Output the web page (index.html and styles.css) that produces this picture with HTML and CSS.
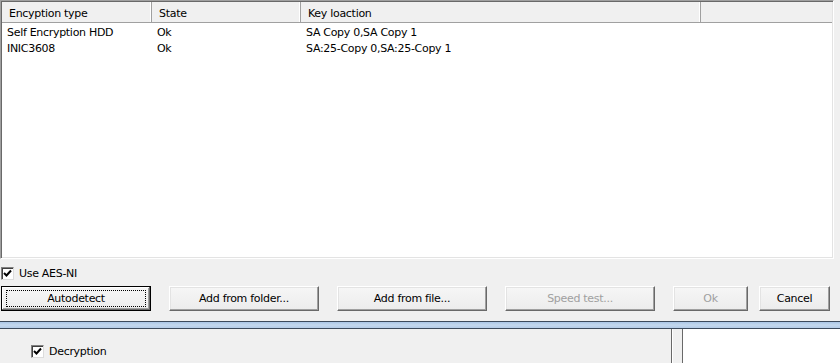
FILE: index.html
```html
<!DOCTYPE html>
<html>
<head>
<meta charset="utf-8">
<link rel="stylesheet" href="styles.css">
</head>
<body>
<div class="dialog">
  <div class="list">
    <div class="row head">
      <div class="cell">Encyption type</div>
      <div class="cell">State</div>
      <div class="cell">Key loaction</div>
      <div class="cell"></div>
    </div>
    <div class="rows">
      <div class="row">
        <div class="cell">Self Encryption HDD</div>
        <div class="cell">Ok</div>
        <div class="cell">SA Copy 0,SA Copy 1</div>
        <div class="cell"></div>
      </div>
      <div class="row">
        <div class="cell">INIC3608</div>
        <div class="cell">Ok</div>
        <div class="cell">SA:25-Copy 0,SA:25-Copy 1</div>
        <div class="cell"></div>
      </div>
    </div>
  </div>
  <label class="check aes"><span class="box"><svg width="9" height="9" viewBox="0 0 9 9"><path d="M1 4 L3.5 6.5 L8 1.5" fill="none" stroke="#000" stroke-width="2"/></svg></span>Use AES-NI</label>
  <div class="buttons">
    <button class="btn default"><span class="focus">Autodetect</span></button>
    <button class="btn">Add from folder...</button>
    <button class="btn">Add from file...</button>
    <button class="btn disabled">Speed test...</button>
    <button class="btn small disabled">Ok</button>
    <button class="btn small">Cancel</button>
  </div>
</div>
<div class="separator"></div>
<div class="lower">
  <div class="left">
    <label class="check"><span class="box"><svg width="9" height="9" viewBox="0 0 9 9"><path d="M1 4 L3.5 6.5 L8 1.5" fill="none" stroke="#000" stroke-width="2"/></svg></span>Decryption</label>
  </div>
  <div class="splitter"></div>
  <div class="right"></div>
</div>
</body>
</html>
```
FILE: styles.css
```css
html, body {
  margin: 0;
  padding: 0;
}
body {
  width: 840px;
  height: 363px;
  overflow: hidden;
  background: #f0f0f0;
  font-family: "DejaVu Sans", Verdana, sans-serif;
  font-size: 11px;
  letter-spacing: -0.3px;
  color: #000;
}
.dialog {
  padding-right: 6px;
}
.list {
  box-sizing: border-box;
  width: 834px;
  height: 259px;
  background: #fff;
  border: 1px solid #a0a0a0;
  border-right-color: #fff;
  border-bottom-color: #fff;
  box-shadow: inset 1px 1px 0 #696969, inset -1px -1px 0 #e3e3e3;
  padding: 1px 1px 0 1px;
}
.row {
  display: grid;
  grid-template-columns: 150px 149px 400px 1fr;
  height: 16px;
  line-height: 16px;
}
.row .cell {
  padding-left: 5px;
  white-space: nowrap;
  overflow: hidden;
}
.head {
  height: 21px;
  line-height: 17px;
  background: #f0f0f0;
  border-bottom: 1px solid #a0a0a0;
  box-sizing: border-box;
}
.head .cell {
  padding: 3px 0 0 7px;
  border-right: 1px solid #a0a0a0;
  box-shadow: inset -1px 0 0 #fff;
}
.head .cell:last-child {
  border-right: none;
  box-shadow: none;
}
.rows {
  padding-top: 2px;
}
.check {
  display: flex;
  align-items: center;
  height: 14px;
}
.check .box {
  box-sizing: border-box;
  width: 13px;
  height: 13px;
  background: #fff;
  border: 1px solid #808080;
  border-right-color: #dcdcdc;
  border-bottom-color: #dcdcdc;
  box-shadow: inset 1px 1px 0 #404040;
  display: flex;
  align-items: center;
  justify-content: center;
  margin-right: 5px;
}
.aes {
  margin: 7px 0 0 1px;
}
.buttons {
  display: flex;
  gap: 18px;
  margin-top: 6px;
  padding-left: 1px;
}
.btn {
  box-sizing: border-box;
  width: 150px;
  height: 25px;
  font: inherit;
  letter-spacing: inherit;
  color: #000;
  background: linear-gradient(#f6f6f6, #ececec);
  border: 1px solid #fff;
  border-right-color: #696969;
  border-bottom-color: #696969;
  box-shadow: inset -1px -1px 0 #a0a0a0, inset 1px 1px 0 #e3e3e3;
  padding: 0;
  display: flex;
  align-items: center;
  justify-content: center;
}
.btn.small {
  width: 75px;
}
.btn.small + .btn.small {
  width: 71px;
  margin-left: -7px;
}
.btn.disabled {
  color: #a0a0a0;
}
.btn.default {
  border: 1px solid #000;
  box-shadow: inset -1px -1px 0 #696969, inset 1px 1px 0 #fff, inset -2px -2px 0 #a0a0a0;
}
.btn .focus {
  box-sizing: border-box;
  width: 140px;
  height: 17px;
  line-height: 15px;
  border: 1px dotted #000;
  text-align: center;
}
.separator {
  box-sizing: border-box;
  margin-top: 10px;
  height: 8px;
  border-top: 1px solid #3c4a5c;
  border-bottom: 1px solid #3c4a5c;
  background: linear-gradient(#aac6e6, #c4d8ee 50%, #b4cce8);
}
.lower {
  display: flex;
  height: 34px;
}
.left {
  width: 671px;
  padding: 15px 0 0 31px;
  box-sizing: border-box;
}
.splitter {
  box-sizing: border-box;
  width: 12px;
  border-left: 1px solid #696969;
  border-right: 1px solid #696969;
  box-shadow: inset 1px 0 0 #fff;
}
.right {
  flex: 1;
  background: #fff;
}
```
